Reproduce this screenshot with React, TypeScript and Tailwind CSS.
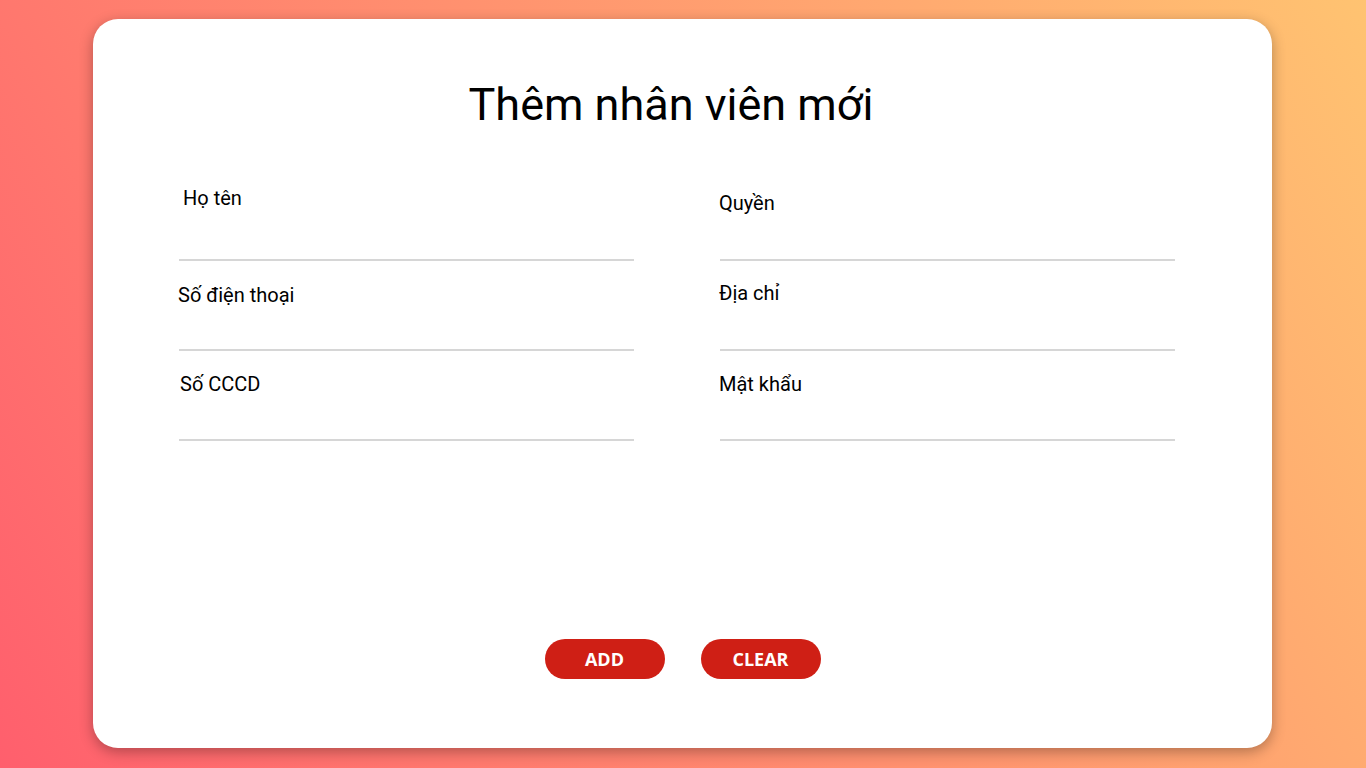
import React from "react";

type Field = { label: string; mt: string; ml: string };

const fields: Field[] = [
  { label: "Họ tên", mt: "mt-[15px]", ml: "ml-[4px]" },
  { label: "Quyền", mt: "mt-[20px]", ml: "-ml-[1px]" },
  { label: "Số điện thoại", mt: "mt-[22px]", ml: "-ml-[1px]" },
  { label: "Địa chỉ", mt: "mt-[20px]", ml: "-ml-[1px]" },
  { label: "Số CCCD", mt: "mt-[21px]", ml: "ml-[1px]" },
  { label: "Mật khẩu", mt: "mt-[21px]", ml: "-ml-[1px]" },
];

export default function App() {
  return (
    <div className="min-h-[768px] w-full bg-[linear-gradient(60deg,#ff5f6d,#ffc371)] pt-[19px] pb-[20px] font-['Roboto',sans-serif]">
      <div className="ml-[93px] w-[1179px] h-[729px] rounded-[25px] bg-white shadow-[0_4px_14px_rgba(0,0,0,0.3)] pt-[59px] pb-[69px] pl-[86px] pr-[97px] flex flex-col">
        <h1 className="text-center text-[45px] leading-[53px] text-black font-normal pr-[12px]">
          Thêm nhân viên mới
        </h1>
        <div className="mt-[40px] grid grid-cols-[455px_455px] gap-x-[86px]">
          {fields.map((f) => (
            <div key={f.label} className="flex h-[90px] flex-col justify-between">
              <label className={`${f.mt} ${f.ml} text-[20px] leading-[24px] text-black`}>{f.label}</label>
              <input
                type="text"
                className="h-[30px] w-full border-b-2 border-[#d6d6d6] bg-transparent outline-none"
              />
            </div>
          ))}
        </div>
        <div className="mt-[198px] flex justify-center gap-[36px] pl-[11px]">
          <button className="h-[40px] w-[120px] rounded-full bg-[#cf1f15] text-[18px] font-bold uppercase text-white font-['Open_Sans',sans-serif]">
            Add
          </button>
          <button className="h-[40px] w-[120px] rounded-full bg-[#cf1f15] text-[18px] font-bold uppercase text-white font-['Open_Sans',sans-serif]">
            Clear
          </button>
        </div>
      </div>
    </div>
  );
}
